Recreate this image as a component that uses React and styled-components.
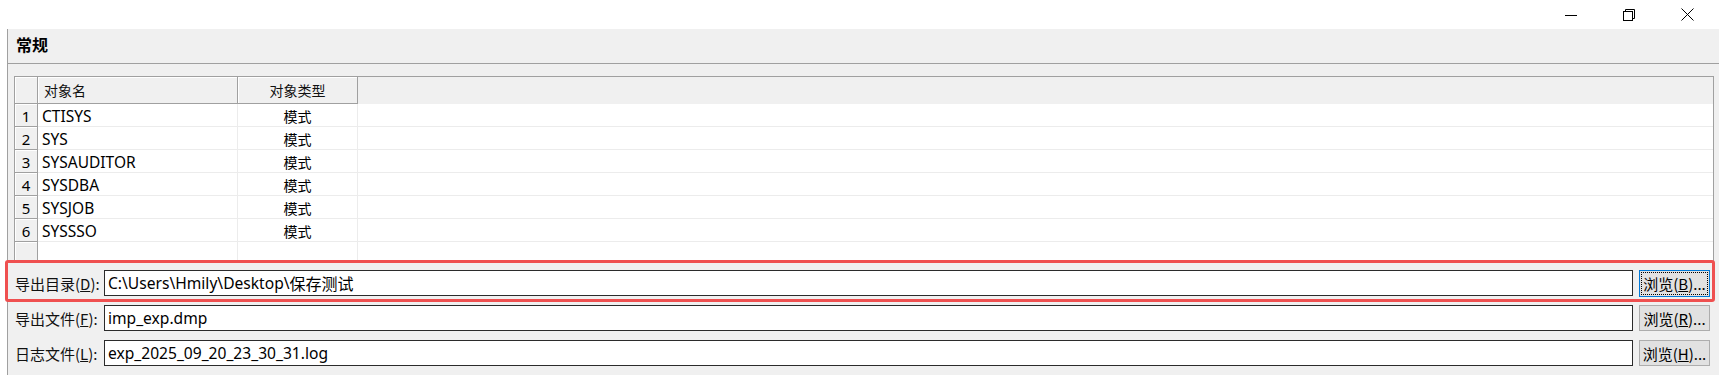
import React from "react";
import styled, { createGlobalStyle } from "styled-components";

const GlobalStyle = createGlobalStyle`
  html, body { margin: 0; padding: 0; background: #ffffff; }
  body {
    font-family: "Segoe UI", "Noto Sans", "Noto Sans CJK SC", sans-serif;
    color: #000;
  }
  * { box-sizing: border-box; }
`;

const Window = styled.div`
  width: 1719px;
  height: 375px;
  display: flex;
  flex-direction: column;
  background: #ffffff;
  overflow: hidden;
`;

const TitleBar = styled.div`
  height: 29px;
  flex: none;
  display: flex;
  justify-content: flex-end;
  background: #ffffff;
  padding-right: 3px;
`;

const CaptionButton = styled.div`
  width: 58px;
  height: 29px;
  display: flex;
  align-items: center;
  justify-content: center;
  color: #000;
`;

const Body = styled.div`
  flex: 1;
  margin-left: 7px;
  border-left: 1px solid #a0a0a0;
  background: #f0f0f0;
  display: flex;
  flex-direction: column;
`;

const SectionTitle = styled.div`
  height: 35px;
  flex: none;
  border-bottom: 1px solid #a0a0a0;
  padding-left: 8px;
  padding-bottom: 5px;
  display: flex;
  align-items: center;
  font-size: 16px;
  font-weight: bold;
  font-family: "Noto Sans CJK SC", sans-serif;
`;

const Content = styled.div`
  padding: 12px 5px 0 6px;
  display: flex;
  flex-direction: column;
`;

const Table = styled.div`
  height: 187px;
  border: 1px solid #a0a0a0;
  border-bottom: none;
  background: #ffffff;
  display: flex;
  flex-direction: column;
  overflow: hidden;
`;

const Row = styled.div`
  display: grid;
  grid-template-columns: 23px 200px 120px 1fr;
  grid-template-rows: minmax(0, 1fr);
  height: ${(p) => p.$h}px;
  flex: none;
  line-height: 1.2;
  background: ${(p) => (p.$header ? "#f0f0f0" : "#ffffff")};
`;

const HeadCell = styled.div`
  background: #f0f0f0;
  border-right: 1px solid #a0a0a0;
  border-bottom: 1px solid #a0a0a0;
  box-shadow: inset 1px 1px 0 #ffffff;
  font-size: 14px;
  display: flex;
  align-items: center;
  justify-content: ${(p) => (p.$center ? "center" : "flex-start")};
  padding-left: ${(p) => (p.$center ? 0 : 6)}px;
  padding-top: 1px;
  font-family: "Noto Sans CJK SC", sans-serif;
  color: #111;
  overflow: hidden;
`;

const NumCell = styled.div`
  background: #f0f0f0;
  border-right: 1px solid #a0a0a0;
  border-bottom: 1px solid #a0a0a0;
  box-shadow: inset 1px 1px 0 #ffffff;
  font-size: 15px;
  display: flex;
  align-items: center;
  justify-content: center;
  padding-top: 1px;
  overflow: hidden;
`;

const Cell = styled.div`
  border-right: ${(p) => (p.$last ? "none" : "1px solid #ececec")};
  border-bottom: 1px solid #ececec;
  font-size: ${(p) => (p.$cjk ? 14 : 15.5)}px;
  display: flex;
  align-items: center;
  justify-content: ${(p) => (p.$center ? "center" : "flex-start")};
  padding-left: ${(p) => (p.$center ? 0 : 4)}px;
  padding-top: 3px;
  white-space: nowrap;
  overflow: hidden;
  font-family: ${(p) =>
    p.$cjk ? '"Noto Sans CJK SC", sans-serif' : '"Segoe UI", "Noto Sans", sans-serif'};
`;

const Filler = styled.div`
  background: #f0f0f0;
`;

const Form = styled.div`
  margin-top: 7px;
  margin-right: 4px;
  display: flex;
  flex-direction: column;
  gap: 9px;
`;

const FieldRow = styled.div`
  position: relative;
  display: flex;
  align-items: center;
  height: 26px;
  gap: 6px;
`;

const Label = styled.div`
  width: 84px;
  flex: none;
  padding-left: 1px;
  font-size: 15px;
  white-space: nowrap;
  font-family: "Noto Sans CJK SC", sans-serif;
  color: #111;
`;

const Input = styled.div`
  flex: 1;
  height: 26px;
  border: 1px solid #2b2b2b;
  background: #ffffff;
  padding-left: 3px;
  display: flex;
  align-items: center;
  font-size: 15.6px;
  white-space: nowrap;
`;

const Cjk = styled.span`
  font-family: "Noto Sans CJK SC", sans-serif;
  font-size: 16px;
`;

const Button = styled.div`
  width: 71px;
  height: ${(p) => (p.$focused ? 27 : 26)}px;
  flex: none;
  background: #e1e1e1;
  border: 1px solid ${(p) => (p.$focused ? "#0078d7" : "#adadad")};
  display: flex;
  align-items: center;
  justify-content: center;
  font-size: 15px;
  white-space: nowrap;
  font-family: "Noto Sans CJK SC", sans-serif;
  outline: ${(p) => (p.$focused ? "1px dotted #000" : "none")};
  outline-offset: -3px;
`;

const Highlight = styled.div`
  position: absolute;
  left: -9px;
  top: -10px;
  right: -5px;
  bottom: -6px;
  border: 3px solid #ef5050;
  border-radius: 3px;
  pointer-events: none;
`;

const Minimize = () => (
  <svg width="12" height="12" viewBox="0 0 12 12">
    <path d="M0 6.5H12" stroke="#000" strokeWidth="1" />
  </svg>
);
const Restore = () => (
  <svg width="12" height="12" viewBox="0 0 12 12">
    <rect x="0.5" y="2.5" width="9" height="9" fill="none" stroke="#000" />
    <path d="M2.5 2.5V0.5H11.5V9.5H9.5" fill="none" stroke="#000" />
  </svg>
);
const Close = () => (
  <svg width="13" height="13" viewBox="0 0 13 13">
    <path d="M0.5 0.5L12.5 12.5M12.5 0.5L0.5 12.5" stroke="#000" strokeWidth="1" />
  </svg>
);

const rows = ["CTISYS", "SYS", "SYSAUDITOR", "SYSDBA", "SYSJOB", "SYSSSO"];

const fields = [
  { label: "导出目录", key: "D", value: "C:\\Users\\Hmily\\Desktop\\", cjk: "保存测试", btn: "B", focused: true },
  { label: "导出文件", key: "F", value: "imp_exp.dmp", btn: "R" },
  { label: "日志文件", key: "L", value: "exp_2025_09_20_23_30_31.log", btn: "H" },
];

export default function App() {
  return (
    <>
      <GlobalStyle />
      <Window>
        <TitleBar>
          <CaptionButton><Minimize /></CaptionButton>
          <CaptionButton><Restore /></CaptionButton>
          <CaptionButton><Close /></CaptionButton>
        </TitleBar>
        <Body>
          <SectionTitle>常规</SectionTitle>
          <Content>
            <Table>
              <Row $h={27} $header>
                <HeadCell />
                <HeadCell>对象名</HeadCell>
                <HeadCell $center>对象类型</HeadCell>
                <Filler />
              </Row>
              {rows.map((name, i) => (
                <Row key={name} $h={23}>
                  <NumCell>{i + 1}</NumCell>
                  <Cell>{name}</Cell>
                  <Cell $center $cjk>模式</Cell>
                  <Cell $last />
                </Row>
              ))}
              <Row $h={23}>
                <NumCell />
                <Cell />
                <Cell />
                <Cell $last />
              </Row>
            </Table>
            <Form>
              {fields.map((f) => (
                <FieldRow key={f.key}>
                  <Label>
                    {f.label}(<u>{f.key}</u>):
                  </Label>
                  <Input>
                    {f.value}
                    {f.cjk && <Cjk>{f.cjk}</Cjk>}
                  </Input>
                  <Button $focused={f.focused}>
                    浏览(<u>{f.btn}</u>)...
                  </Button>
                  {f.focused && <Highlight />}
                </FieldRow>
              ))}
            </Form>
          </Content>
        </Body>
      </Window>
    </>
  );
}
